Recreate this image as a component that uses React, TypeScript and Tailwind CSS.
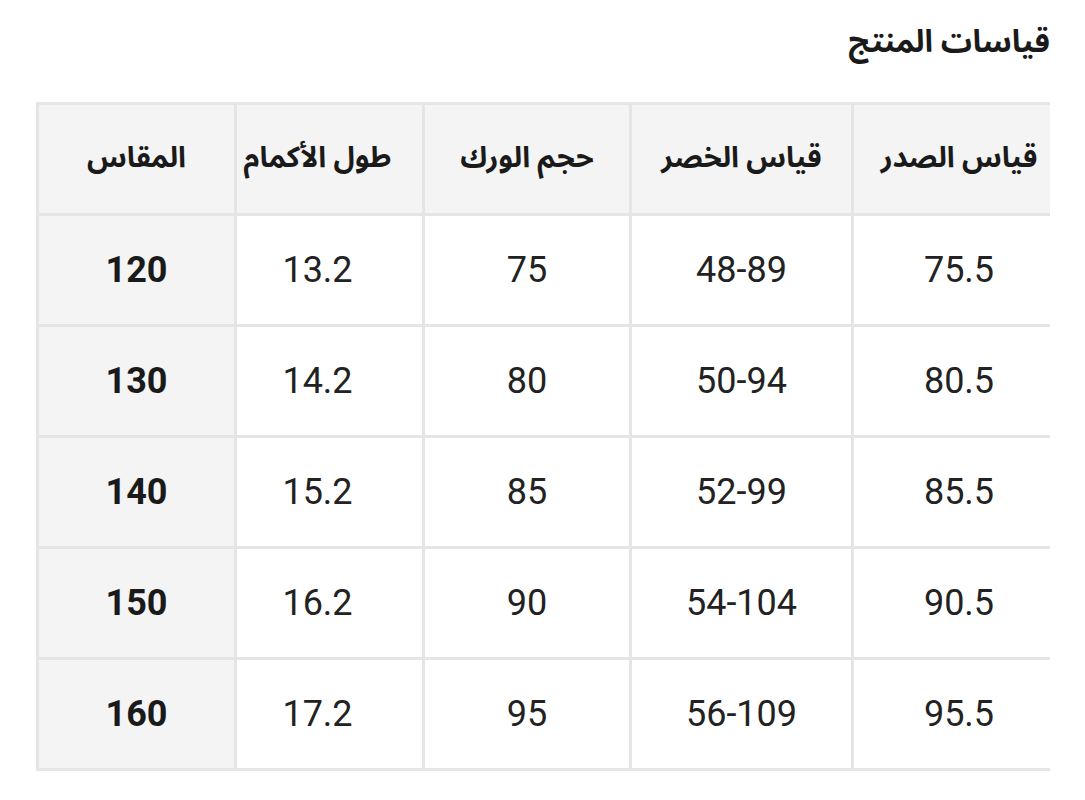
import React from "react";

const headers = ["قياس الصدر", "قياس الخصر", "حجم الورك", "طول الأكمام", "المقاس"];
const rows = [
  ["75.5", "48-89", "75", "13.2", "120"],
  ["80.5", "50-94", "80", "14.2", "130"],
  ["85.5", "52-99", "85", "15.2", "140"],
  ["90.5", "54-104", "90", "16.2", "150"],
  ["95.5", "56-109", "95", "17.2", "160"],
];

const font = { fontFamily: 'Roboto, "Noto Sans Arabic", "DejaVu Sans", sans-serif' };

const colPad = ["pl-[14px]", "", "", "pr-[24px]", ""];

export default function App() {
  return (
    <div className="w-[1085px] h-[800px] bg-white pl-[36px] pr-[35px] pt-[20px]" style={font} dir="rtl">
      <h1 className="text-[31px] font-bold text-[#1a1a1a] leading-[44px] h-[82px]">قياسات المنتج</h1>
      <div className="grid grid-cols-[199px_222px_207px_188px_198px] border-t-[3px] border-[#e5e5e5]">
        {headers.map((h, i) => (
          <div
            key={h}
            className={`h-[111px] flex items-center justify-center bg-[#f4f4f4] border-b-[3px] border-l-[3px] border-[#e5e5e5] text-[29px] font-bold text-[#1a1a1a] pb-[2px] ${colPad[i]}`}
          >
            {h}
          </div>
        ))}
        {rows.map((r, ri) =>
          r.map((c, ci) => (
            <div
              key={ri + "-" + ci}
              className={`h-[111px] flex items-center justify-center border-b-[3px] border-l-[3px] border-[#e5e5e5] text-[36px] ${colPad[ci]} ${
                ci === 4 ? "bg-[#f4f4f4] font-bold text-[#1a1a1a]" : "bg-white text-[#222222]"
              }`}
            >
              {c}
            </div>
          ))
        )}
      </div>
    </div>
  );
}
